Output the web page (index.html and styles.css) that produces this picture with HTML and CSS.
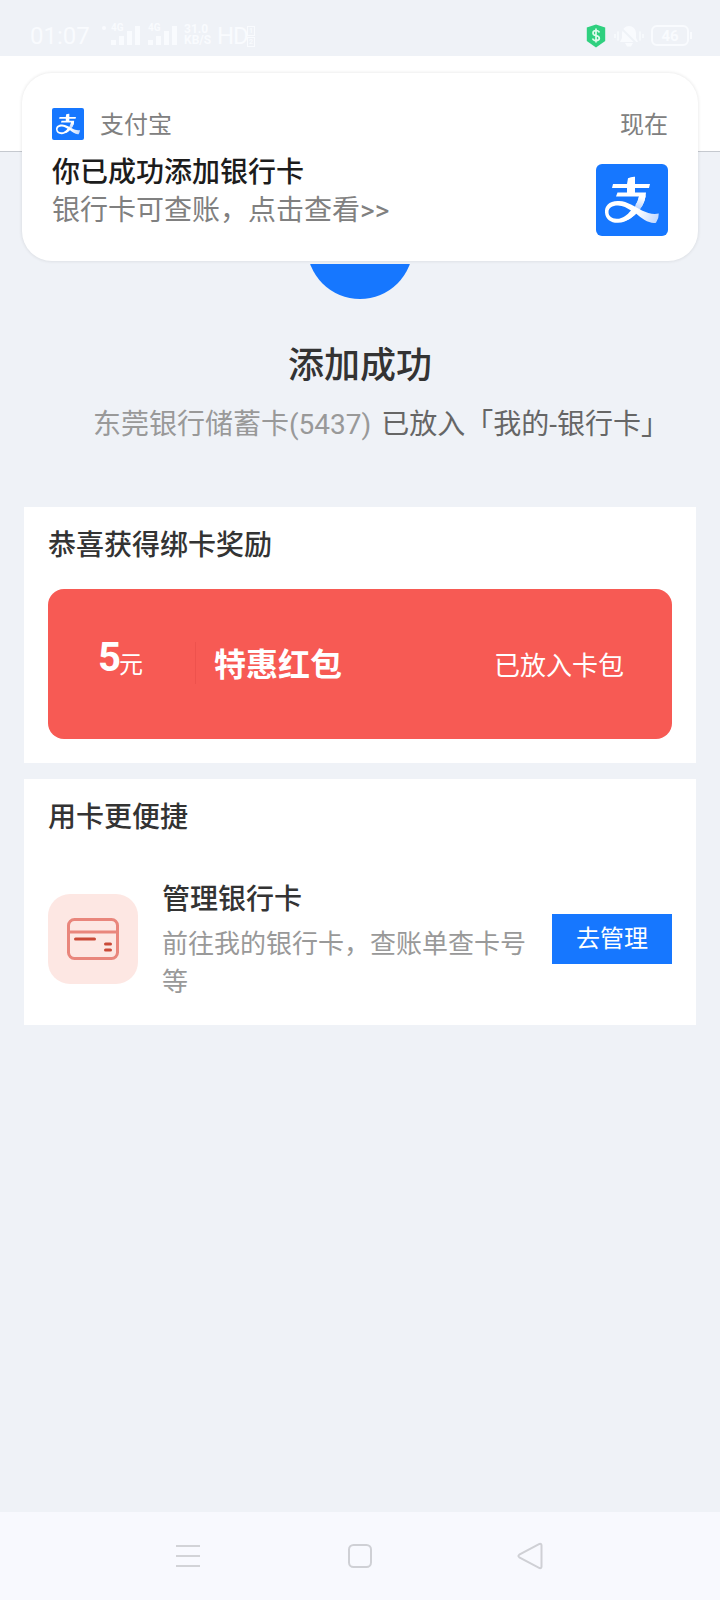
FILE: index.html
```html
<!DOCTYPE html>
<html lang="zh-CN">
<head>
<meta charset="utf-8">
<title>添加成功</title>
<link rel="stylesheet" href="styles.css">
</head>
<body>
<svg class="defs" width="0" height="0" aria-hidden="true">
  <defs>
    <linearGradient id="tail" gradientUnits="userSpaceOnUse" x1="34" y1="46" x2="61" y2="56">
      <stop offset="0" stop-color="#fff"/><stop offset="0.25" stop-color="#fff"/><stop offset="1" stop-color="#c3d9ff"/>
    </linearGradient>
    <linearGradient id="stem" gradientUnits="userSpaceOnUse" x1="46" y1="34" x2="40" y2="53">
      <stop offset="0" stop-color="#fff"/><stop offset="0.6" stop-color="#b4d0ff"/><stop offset="1" stop-color="#fff"/>
    </linearGradient>
    <symbol id="alipay" viewBox="0 0 72 72">
      <path d="M32 14.200Q35 12.500 39 12.700V20H54L53 24H39V28.500H50Q49.500 38 44.500 44L39.500 41Q42.500 37 43 32.500H20L21.500 28.500H31V24H16L17 20H31Z" fill="#fff"/>
      <path d="M43.300 31.500H49.700Q48 43 39 51Q34 55.500 29 57L30 53Q40 45 43.300 31.500Z" fill="url(#stem)"/>
      <path fill-rule="evenodd" d="M23 37C13 36.500 8.500 42 9 48.500C9.500 55.500 15 59 22 58.800C31 58.500 36.500 52.500 40 49.500C46 54.500 53 60 60 58.800Q63 54.500 62.800 49.500C53 52 42 44 35 40.500C31 38.500 27.500 37.200 23 37ZM22 41.500C27 41.500 31 44 35 46.500C31 51 27 55 20.500 54.800C15.500 54.600 12.500 52 12.500 48C12.500 44 16 41.500 22 41.500Z" fill="url(#tail)"/>
    </symbol>
  </defs>
</svg>

<main class="screen">
  <header class="status">
    <div class="status-left">
      <span class="clock">01:07</span>
      <svg class="signals" width="82" height="24" viewBox="0 0 82 24" fill="currentColor">
        <circle cx="6" cy="6" r="2"/>
        <text x="13" y="9" font-size="10" font-weight="700">4G</text>
        <path d="M13 18h5v5h-5zM21 14h5v9h-5zM29 9h5v14h-5zM37 4h5v19h-5z"/>
        <text x="50" y="9" font-size="10" font-weight="700">4G</text>
        <path d="M50 18h5v5h-5zM58 14h5v9h-5zM66 9h5v14h-5zM74 4h5v19h-5z"/>
      </svg>
      <span class="speed"><b>31.0</b><b>KB/S</b></span>
      <span class="hd">HD</span>
      <span class="sims"><i>1</i><i>2</i></span>
    </div>
    <div class="status-right">
      <svg width="20" height="24" viewBox="0 0 20 24">
        <path d="M10 .5 19.200 3.500V17L10 23.500.8 17V3.500Z" fill="#2fd07f"/>
        <path d="M13.300 8.500Q12.700 6.500 10 6.500Q7 6.500 7 8.900Q7 11 10 11.500Q13.300 12 13.300 14.300Q13.300 16.600 10 16.600Q7 16.600 6.700 14.500M10 4.500V18.500" fill="none" stroke="#dffbec" stroke-width="1.700"/>
      </svg>
      <svg class="mute" width="30" height="24" viewBox="0 0 30 24">
        <path d="M15 2a7 7 0 0 1 7 7v5l2 4H6l2-4V9a7 7 0 0 1 7-7ZM11 19h8l-2 3.500h-4Z" fill="currentColor"/>
        <path d="M1 10v4M4 7.500v9M26 7.500v9M29 10v4" stroke="currentColor" stroke-width="1.500"/>
        <path d="M6 3l18 18" stroke="#eff2f7" stroke-width="2"/>
      </svg>
      <span class="battery">46</span>
    </div>
  </header>
  <div class="titlebar"></div>

  <section class="result">
    <div class="result-mark"></div>
    <h1>添加成功</h1>
    <p><span>东莞银行储蓄卡(5437)</span> 已放入「我的-银行卡」</p>
  </section>

  <section class="card">
    <h2>恭喜获得绑卡奖励</h2>
    <div class="coupon">
      <div class="amount"><b>5</b><span>元</span></div>
      <div class="coupon-name">特惠红包</div>
      <div class="coupon-state">已放入卡包</div>
    </div>
  </section>

  <section class="card card-manage">
    <h2>用卡更便捷</h2>
    <div class="manage">
      <div class="manage-icon">
        <svg width="52" height="42" viewBox="0 0 52 42" fill="none">
          <rect x="1.500" y="1.500" width="49" height="39" rx="6" stroke="#e9867c" stroke-width="3"/>
          <path d="M2 14h48" stroke="#e9867c" stroke-width="3"/>
          <path d="M8.500 21h19M38.500 26h5M38.500 32h5" stroke="#ca4a38" stroke-width="3" stroke-linecap="round"/>
        </svg>
      </div>
      <div class="manage-text">
        <h3>管理银行卡</h3>
        <p>前往我的银行卡，查账单查卡号等</p>
      </div>
      <button class="go">去管理</button>
    </div>
  </section>

  <nav class="navbar">
    <svg width="26" height="28" viewBox="0 0 26 28"><path d="M1 4h24M1 14h24M1 24h24" stroke="#d2d3d7" stroke-width="2"/></svg>
    <svg width="26" height="28" viewBox="0 0 26 28"><rect x="2" y="3" width="22" height="22" rx="4.500" fill="none" stroke="#cfd0d5" stroke-width="2"/></svg>
    <svg width="26" height="28" viewBox="2 0 26 28"><path d="M22.500 1.900 2.300 12.700Q.5 14 2.300 15.300L22.500 26.100Q24.500 26.500 24.500 24.500V3.500Q24.500 1.500 22.500 1.900Z" fill="none" stroke="#cfd0d5" stroke-width="2" overflow="visible"/></svg>
  </nav>

  <aside class="notice">
    <div class="notice-head">
      <svg class="app-icon" width="32" height="32"><use href="#alipay"/></svg>
      <span class="app-name">支付宝</span>
      <time>现在</time>
    </div>
    <div class="notice-body">
      <div>
        <strong>你已成功添加银行卡</strong>
        <p>银行卡可查账，点击查看&gt;&gt;</p>
      </div>
      <svg class="app-icon app-icon-large" width="72" height="72"><use href="#alipay"/></svg>
    </div>
  </aside>
</main>
</body>
</html>
```
FILE: styles.css
```css
* { box-sizing: border-box; margin: 0; padding: 0; }
body {
  font-family: Roboto, "Noto Sans CJK SC", sans-serif;
  background: #eff2f7;
  color: #333;
}
.defs { position: absolute; }
svg { display: block; flex: none; overflow: visible; }
.screen {
  position: relative;
  width: 720px;
  height: 1600px;
  display: flex;
  flex-direction: column;
  overflow: hidden;
}

.status {
  height: 56px;
  padding: 15px 31px 0 30px;
  display: flex;
  justify-content: space-between;
  color: #f9fbfe;
}
.status-left { display: flex; align-items: center; height: 42px; }
.status-right { display: flex; align-items: flex-start; padding-top: 9px; }
.clock { width: 68px; font-size: 24px; }
.signals { margin-top: -4px; }
.speed { width: 33px; margin: -3px 0 0 4px; display: flex; flex-direction: column; font-size: 12px; line-height: 11px; }
.hd { width: 30px; font-size: 24px; letter-spacing: -1px; }
.sims { display: flex; flex-direction: column; gap: 1px; }
.sims i { width: 8px; height: 10px; border: 1px solid; font: 700 7px/8px Roboto, sans-serif; text-align: center; }
.mute { margin: 0 7px 0 8px; }
.battery {
  position: relative;
  width: 38px;
  height: 21px;
  margin-top: 1px;
  border: 2px solid;
  border-radius: 6px;
  font-size: 15px;
  font-weight: 700;
  line-height: 18px;
  text-align: center;
}
.battery::after {
  content: "";
  position: absolute;
  right: -5px;
  top: 5px;
  width: 2px;
  height: 7px;
  background: currentColor;
}

.titlebar { height: 96px; background: #fff; border-bottom: 1px solid #c5c9cf; }

.result { height: 355px; padding-top: 41px; text-align: center; }
/* Only the part of the tick badge below the notification is visible. */
.result-mark { width: 106px; height: 106px; margin: 0 auto; border-radius: 50%; background: #1677ff; clip-path: inset(71px 0 0 0); }
.result h1 { margin-top: 41px; font-size: 36px; font-weight: 500; line-height: 52px; }
.result p { padding-left: 93px; margin-top: 13px; font-size: 28px; line-height: 40px; word-spacing: 3px; text-align: left; white-space: nowrap; color: #666; }
.result p span { color: #999; }

.card { height: 256px; margin: 0 24px 16px; padding: 19px 24px 0; background: #fff; }
.card h2 { font-size: 28px; font-weight: 500; line-height: 40px; }
.coupon {
  height: 150px;
  margin-top: 23px;
  padding: 0 48px 0 50px;
  display: flex;
  align-items: center;
  border-radius: 16px;
  background: #f75a54;
  color: #fff;
}
.amount { width: 98px; height: 42px; margin-top: -2px; border-right: 1px solid #ee524d; line-height: 32px; white-space: nowrap; }
.amount b { font-size: 40px; }
.amount span { position: relative; top: 2px; margin-left: -2px; font-size: 24px; }
.coupon-name { margin-left: 18px; padding-top: 1px; font-size: 32px; font-weight: 700; line-height: 40px; }
.coupon-state { margin-left: auto; padding-top: 3px; font-size: 26px; line-height: 40px; }

.card-manage { height: 246px; margin-bottom: 0; }
.manage { display: flex; align-items: center; height: 120px; margin-top: 41px; }
.manage-icon { width: 90px; height: 90px; display: flex; align-items: center; justify-content: center; border-radius: 22px; background: #fde7e3; }
.manage-text { flex: 1; margin-left: 24px; padding-top: 3px; }
.manage-text h3 { font-size: 28px; font-weight: 500; line-height: 40px; }
.manage-text p { width: 370px; margin-top: 5px; font-size: 26px; line-height: 38px; color: #999; }
.go { width: 120px; height: 50px; padding-top: 1px; border: 0; background: #1677ff; color: #fff; font: 24px/49px Roboto, "Noto Sans CJK SC", sans-serif; }

.navbar {
  height: 88px;
  margin-top: auto;
  padding: 0 175px;
  display: flex;
  justify-content: space-between;
  align-items: center;
  background: #f8f9fe;
}

.notice {
  position: absolute;
  left: 22px;
  top: 73px;
  width: 676px;
  height: 188px;
  padding: 35px 30px 0;
  background: #fff;
  border-radius: 30px;
  box-shadow: 0 0 3px 1px rgba(0, 0, 0, 0.07);
}
.notice-head { display: flex; align-items: center; height: 32px; font-size: 24px; line-height: 32px; color: #808080; }
.notice-head time { margin-left: auto; padding-top: 2px; }
.app-name { margin-left: 16px; padding-top: 2px; }
.app-icon { border-radius: 2px; background: #1677ff; }
.app-icon-large { margin-top: 24px; border-radius: 6px; }
.notice-body { display: flex; justify-content: space-between; }
.notice-body strong { display: block; margin-top: 13px; font-size: 28px; font-weight: 500; line-height: 40px; color: #1c1c1c; }
.notice-body p { margin-top: -1px; font-size: 28px; line-height: 38px; color: #808080; }
```
